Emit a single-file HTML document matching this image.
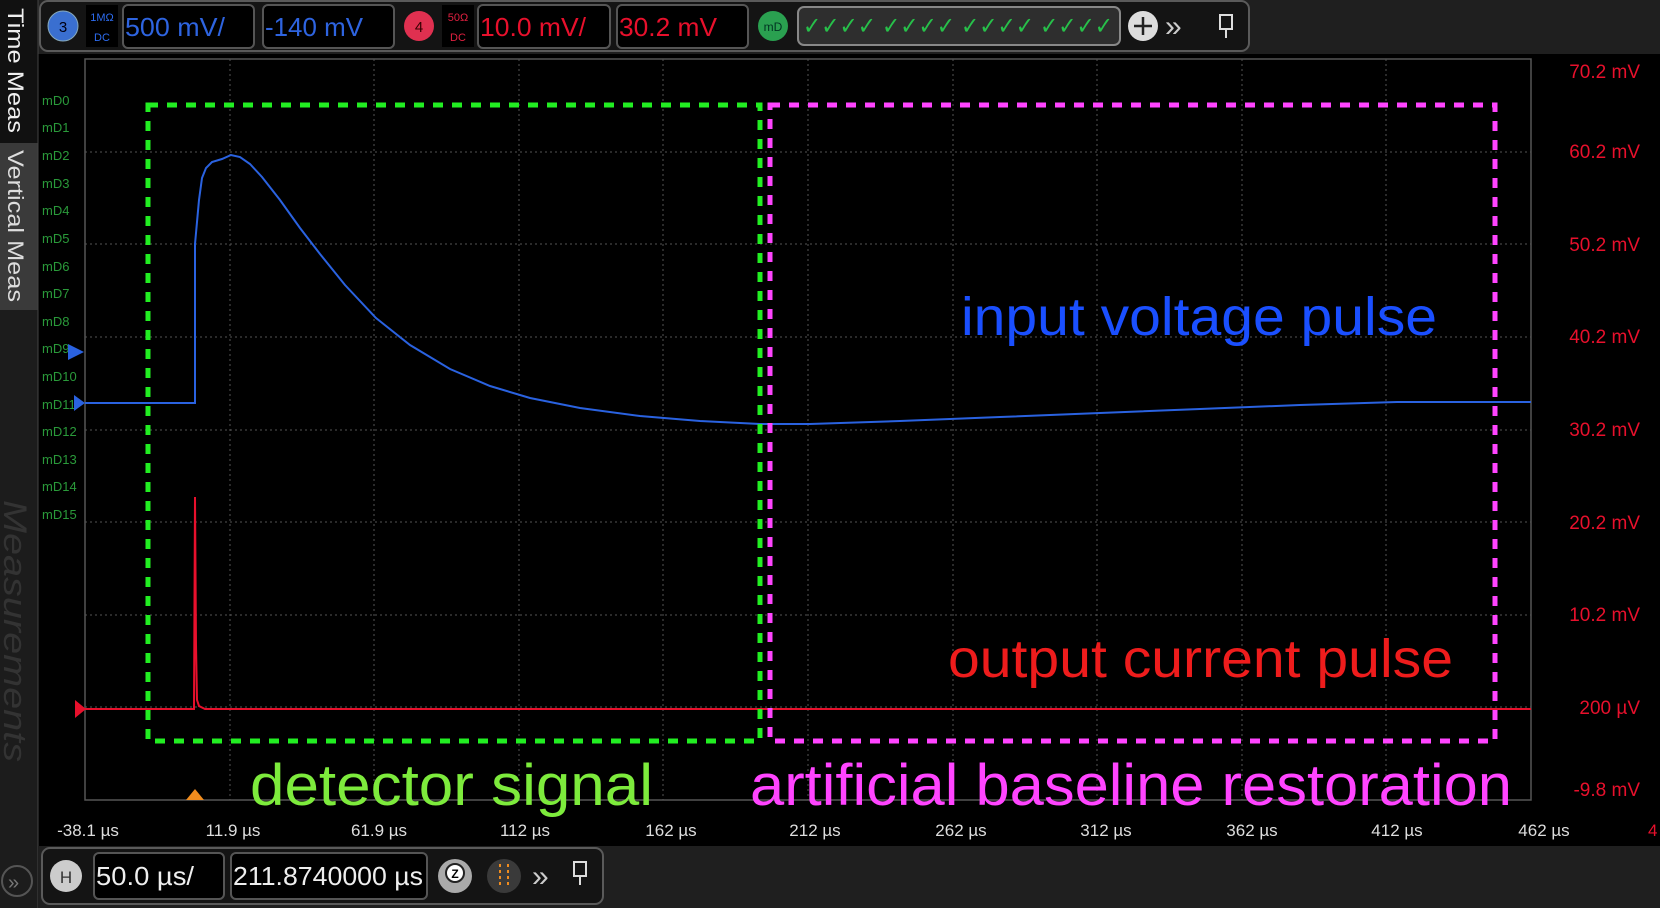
<!DOCTYPE html>
<html><head><meta charset="utf-8"><style>
html,body{margin:0;padding:0;background:#000;width:1660px;height:908px;overflow:hidden}
svg{display:block}
text{font-family:"Liberation Sans",sans-serif}
</style></head><body>
<svg width="1660" height="908" viewBox="0 0 1660 908" xmlns="http://www.w3.org/2000/svg">
<rect width="1660" height="908" fill="#000"/>
<rect x="0" y="0" width="1660" height="54" fill="#1f1f1f"/>
<rect x="40" y="1" width="1209" height="50" rx="8" fill="#141414" stroke="#5a5a5a" stroke-width="2"/>
<rect x="0" y="0" width="38" height="908" fill="#1c1c1c"/>
<rect x="0" y="0" width="38" height="143" fill="#111"/>
<rect x="0" y="143" width="38" height="167" fill="#3a3a3a"/>
<line x1="38" y1="0" x2="38" y2="908" stroke="#444"/>
<text transform="translate(8,8) rotate(90)" font-size="22" fill="#eee" textLength="125" lengthAdjust="spacingAndGlyphs">Time Meas</text>
<text transform="translate(8,150) rotate(90)" font-size="22" fill="#ddd" textLength="152" lengthAdjust="spacingAndGlyphs">Vertical Meas</text>
<text transform="translate(4,500) rotate(90)" font-size="32" font-style="italic" fill="#333" textLength="262" lengthAdjust="spacingAndGlyphs">Measurements</text>
<circle cx="17" cy="881" r="15" fill="none" stroke="#555" stroke-width="2"/>
<text x="8" y="889" font-size="20" fill="#777">»</text>
<circle cx="63" cy="26" r="15" fill="#3a6fd0" stroke="#8ab" stroke-width="1"/>
<text x="63" y="32" font-size="15" fill="#001" text-anchor="middle">3</text>
<rect x="86" y="5" width="32" height="42" fill="#000"/>
<text x="102" y="21" font-size="11" fill="#2d6cf0" text-anchor="middle">1MΩ</text>
<text x="102" y="41" font-size="11" fill="#2d6cf0" text-anchor="middle">DC</text>
<rect x="123" y="5" width="131" height="43" rx="5" fill="#000" stroke="#555" stroke-width="2"/>
<text x="125" y="36" font-size="26" fill="#2e64e0" textLength="100" lengthAdjust="spacingAndGlyphs">500 mV/</text>
<rect x="263" y="5" width="131" height="43" rx="5" fill="#000" stroke="#555" stroke-width="2"/>
<text x="265" y="36" font-size="26" fill="#2e64e0" textLength="98" lengthAdjust="spacingAndGlyphs">-140 mV</text>
<circle cx="419" cy="26" r="15" fill="#e03050"/>
<text x="419" y="32" font-size="15" fill="#300" text-anchor="middle">4</text>
<rect x="442" y="5" width="32" height="42" fill="#000"/>
<text x="458" y="21" font-size="11" fill="#e02040" text-anchor="middle">50Ω</text>
<text x="458" y="41" font-size="11" fill="#e02040" text-anchor="middle">DC</text>
<rect x="478" y="5" width="132" height="43" rx="5" fill="#000" stroke="#555" stroke-width="2"/>
<text x="480" y="36" font-size="26" fill="#e8102c" textLength="106" lengthAdjust="spacingAndGlyphs">10.0 mV/</text>
<rect x="617" y="5" width="131" height="43" rx="5" fill="#000" stroke="#555" stroke-width="2"/>
<text x="619" y="36" font-size="26" fill="#e8102c" textLength="98" lengthAdjust="spacingAndGlyphs">30.2 mV</text>
<circle cx="773" cy="26" r="15" fill="#2aa050"/>
<text x="773" y="31" font-size="12" fill="#032" text-anchor="middle">mD</text>
<rect x="798" y="7" width="322" height="38" rx="6" fill="#2e2e2e" stroke="#888" stroke-width="2"/>
<text x="803" y="34" font-size="24" fill="#27c04a" textLength="310" lengthAdjust="spacingAndGlyphs">✓✓✓✓ ✓✓✓✓ ✓✓✓✓ ✓✓✓✓</text>
<circle cx="1143" cy="26" r="15" fill="#ddd"/>
<path d="M1134 26h18M1143 17v18" stroke="#222" stroke-width="2.5"/>
<text x="1165" y="36" font-size="30" fill="#ccc">»</text>
<rect x="1220" y="15" width="12" height="14" fill="none" stroke="#ddd" stroke-width="2"/>
<line x1="1226" y1="29" x2="1226" y2="38" stroke="#ddd" stroke-width="2"/>
<rect x="85" y="59" width="1446" height="741" fill="#000" stroke="#555" stroke-width="1.5"/>
<g stroke="#555" stroke-dasharray="2,3" stroke-width="1">
<line x1="230" y1="59" x2="230" y2="800"/><line x1="374" y1="59" x2="374" y2="800"/>
<line x1="519" y1="59" x2="519" y2="800"/><line x1="663" y1="59" x2="663" y2="800"/>
<line x1="808" y1="59" x2="808" y2="800"/><line x1="953" y1="59" x2="953" y2="800"/>
<line x1="1097" y1="59" x2="1097" y2="800"/><line x1="1242" y1="59" x2="1242" y2="800"/>
<line x1="1386" y1="59" x2="1386" y2="800"/>
<line x1="85" y1="152" x2="1531" y2="152"/><line x1="85" y1="244" x2="1531" y2="244"/>
<line x1="85" y1="337" x2="1531" y2="337"/><line x1="85" y1="430" x2="1531" y2="430"/>
<line x1="85" y1="522" x2="1531" y2="522"/><line x1="85" y1="615" x2="1531" y2="615"/>
<line x1="85" y1="707" x2="1531" y2="707"/>
</g>
<g font-size="13" fill="#2a9a3a">
<text x="42" y="105">mD0</text><text x="42" y="132">mD1</text><text x="42" y="160">mD2</text><text x="42" y="188">mD3</text>
<text x="42" y="215">mD4</text><text x="42" y="243">mD5</text><text x="42" y="271">mD6</text><text x="42" y="298">mD7</text>
<text x="42" y="326">mD8</text><text x="42" y="353">mD9</text><text x="42" y="381">mD10</text><text x="42" y="409">mD11</text>
<text x="42" y="436">mD12</text><text x="42" y="464">mD13</text><text x="42" y="491">mD14</text><text x="42" y="519">mD15</text>
</g>
<path d="M68 344l16 8-16 8z" fill="#2a62e0"/>
<path d="M74 395l11 8-11 8z" fill="#2a62e0"/>
<path d="M75 700l11 9-11 9z" fill="#e8102c"/>
<polyline fill="none" stroke="#2a62e0" stroke-width="2" points="85,403 195,403 195,244 197,222 199,200 202,178 206,168 212,162 222,159 231,155 240,157 250,164 262,177 280,200 300,228 320,254 345,285 376,318 410,345 450,369 490,386 530,398 580,408 640,416 700,421 760,424 810,424 900,421 1000,417 1100,413 1200,409 1300,405 1397,402 1531,402"/>
<polyline fill="none" stroke="#e8102c" stroke-width="2" points="85,709 194,709 195,497 196,645 197,700 199,706 205,709 1531,709"/>
<rect x="148" y="105" width="612" height="636" fill="none" stroke="#22ee22" stroke-width="5" stroke-dasharray="10,9"/>
<rect x="770" y="105" width="725" height="636" fill="none" stroke="#ff44ff" stroke-width="5" stroke-dasharray="10,9"/>
<text x="961" y="335" font-size="54" fill="#1a4fff" textLength="476" lengthAdjust="spacingAndGlyphs">input voltage pulse</text>
<text x="948" y="677" font-size="54" fill="#ee1c1c" textLength="505" lengthAdjust="spacingAndGlyphs">output current pulse</text>
<text x="250" y="805" font-size="58" fill="#7deb3c" textLength="403" lengthAdjust="spacingAndGlyphs">detector signal</text>
<text x="750" y="805" font-size="58" fill="#ff44ff" textLength="762" lengthAdjust="spacingAndGlyphs">artificial baseline restoration</text>
<path d="M186 800l9-11 9 11z" fill="#f08c1e"/>
<g font-size="19" fill="#e8102c" text-anchor="end">
<text x="1640" y="78">70.2 mV</text><text x="1640" y="158">60.2 mV</text><text x="1640" y="251">50.2 mV</text>
<text x="1640" y="343">40.2 mV</text><text x="1640" y="436">30.2 mV</text><text x="1640" y="529">20.2 mV</text>
<text x="1640" y="621">10.2 mV</text><text x="1640" y="714">200 µV</text><text x="1640" y="796">-9.8 mV</text>
</g>
<g font-size="17" fill="#ddd" text-anchor="middle">
<text x="88" y="836">-38.1 µs</text><text x="233" y="836">11.9 µs</text><text x="379" y="836">61.9 µs</text>
<text x="525" y="836">112 µs</text><text x="671" y="836">162 µs</text><text x="815" y="836">212 µs</text>
<text x="961" y="836">262 µs</text><text x="1106" y="836">312 µs</text><text x="1252" y="836">362 µs</text>
<text x="1397" y="836">412 µs</text><text x="1544" y="836">462 µs</text>
</g>
<text x="1648" y="836" font-size="17" fill="#e8102c">4</text>
<rect x="38" y="846" width="1622" height="62" fill="#1f1f1f"/>
<rect x="42" y="848" width="561" height="56" rx="8" fill="#141414" stroke="#5a5a5a" stroke-width="2"/>
<circle cx="66" cy="876" r="16" fill="#ccc"/>
<text x="66" y="883" font-size="17" fill="#333" text-anchor="middle">H</text>
<rect x="94" y="853" width="130" height="46" rx="5" fill="#000" stroke="#555" stroke-width="2"/>
<text x="96" y="885" font-size="26" fill="#eee" textLength="98" lengthAdjust="spacingAndGlyphs">50.0 µs/</text>
<rect x="231" y="853" width="196" height="46" rx="5" fill="#000" stroke="#555" stroke-width="2"/>
<text x="233" y="885" font-size="26" fill="#eee" textLength="190" lengthAdjust="spacingAndGlyphs">211.8740000 µs</text>
<circle cx="455" cy="876" r="17" fill="#aaa"/>
<circle cx="455" cy="873" r="9" fill="#fff" stroke="#222" stroke-width="2"/>
<text x="455" y="878" font-size="12" fill="#000" text-anchor="middle" font-weight="bold">Z</text>
<circle cx="504" cy="876" r="17" fill="#3a3a3a"/>
<path d="M500 864v24M508 864v24" stroke="#f08c1e" stroke-width="2" stroke-dasharray="3,3"/>
<text x="532" y="886" font-size="30" fill="#ccc">»</text>
<rect x="574" y="862" width="12" height="14" fill="none" stroke="#ddd" stroke-width="2"/>
<line x1="580" y1="876" x2="580" y2="885" stroke="#ddd" stroke-width="2"/>
</svg>
</body></html>
